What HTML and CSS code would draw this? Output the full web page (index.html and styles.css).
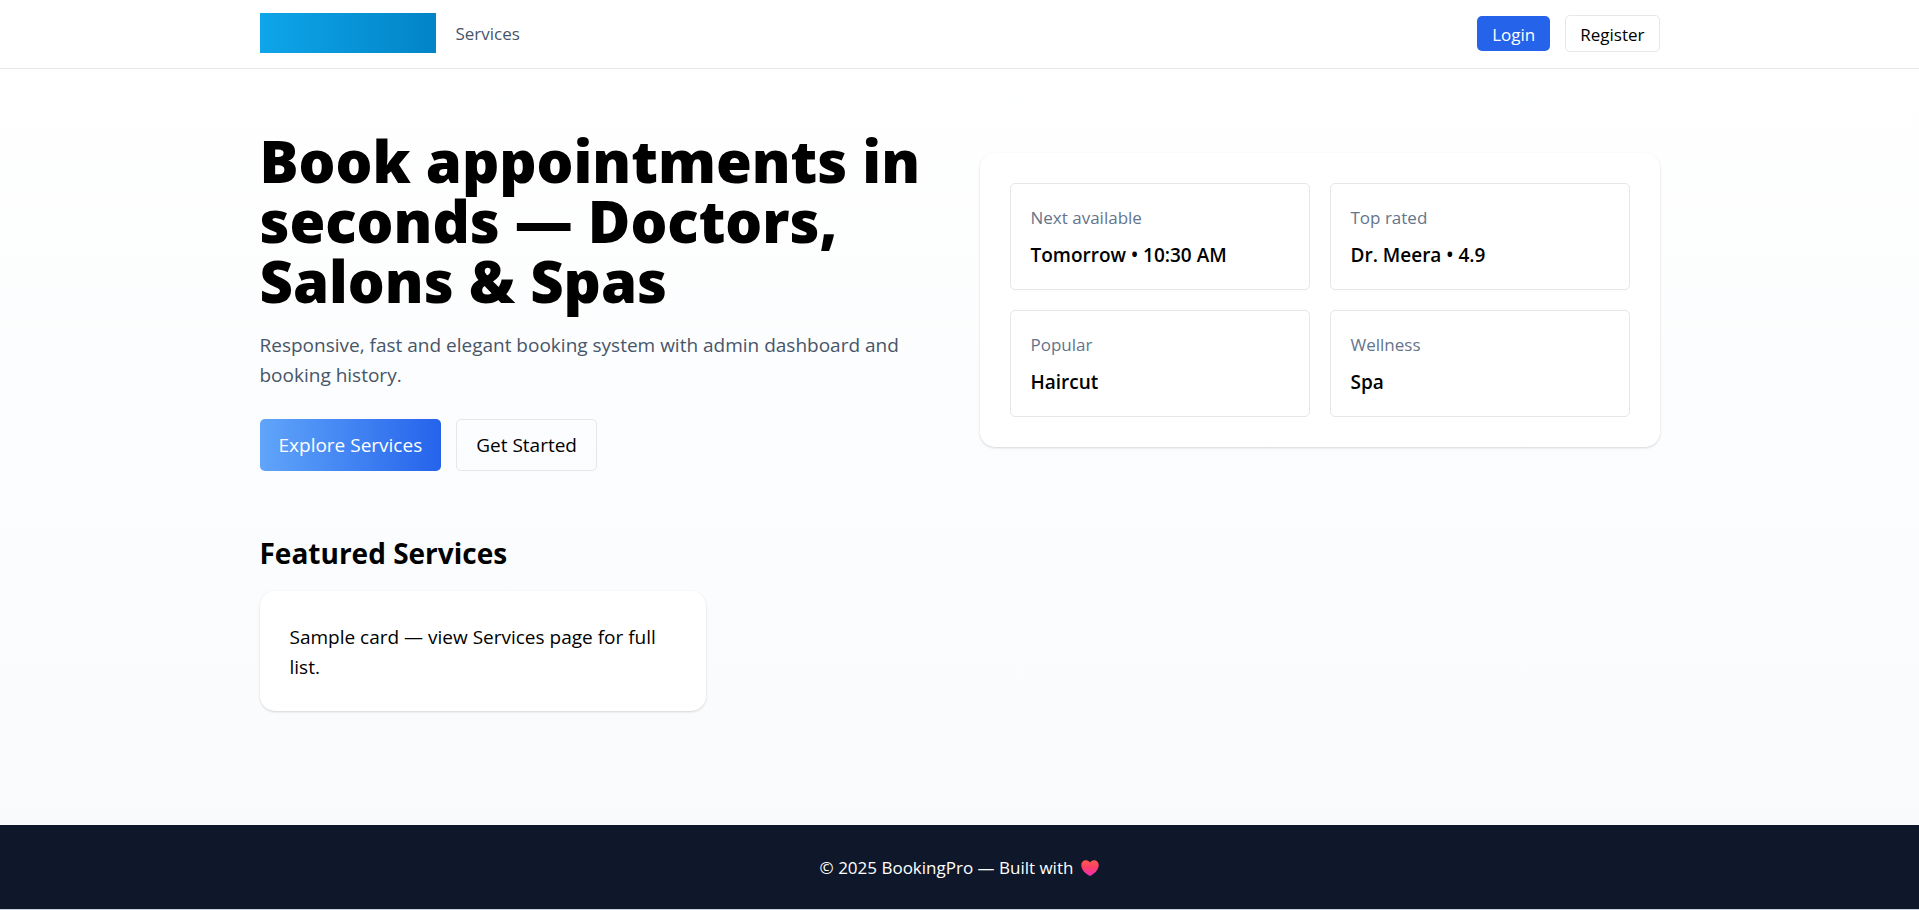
FILE: index.html
```html
<!DOCTYPE html>
<html lang="en">
<head>
<meta charset="utf-8">
<meta name="viewport" content="width=device-width, initial-scale=1">
<title>BookingPro</title>
<link rel="stylesheet" href="styles.css">
</head>
<body>
<header class="site-header">
  <div class="container header-row">
    <nav class="nav">
      <a class="logo" href="#" aria-label="BookingPro"></a>
      <a class="nav-link" href="#services">Services</a>
    </nav>
    <div class="auth">
      <a class="btn-small btn-login" href="#login">Login</a>
      <a class="btn-small btn-register" href="#register">Register</a>
    </div>
  </div>
</header>
<main class="container main">
  <section class="hero">
    <div>
      <h1 class="hero-title">Book appointments in seconds — Doctors, Salons &amp; Spas</h1>
      <p class="hero-text">Responsive, fast and elegant booking system with admin dashboard and booking history.</p>
      <div class="actions">
        <a class="btn btn-primary" href="#services">Explore Services</a>
        <a class="btn btn-outline" href="#register">Get Started</a>
      </div>
    </div>
    <div class="card stats">
      <div class="stat"><div class="stat-label">Next available</div><div class="stat-value">Tomorrow • 10:30 AM</div></div>
      <div class="stat"><div class="stat-label">Top rated</div><div class="stat-value">Dr. Meera • 4.9</div></div>
      <div class="stat"><div class="stat-label">Popular</div><div class="stat-value">Haircut</div></div>
      <div class="stat"><div class="stat-label">Wellness</div><div class="stat-value">Spa</div></div>
    </div>
  </section>
  <section id="services">
    <h2 class="section-title">Featured Services</h2>
    <div class="services">
      <div class="card">Sample card — view Services page for full list.</div>
    </div>
  </section>
</main>
<footer class="site-footer">
  <span>© 2025 BookingPro — Built with</span>
  <svg class="heart" viewBox="0 0 18 16" role="img" aria-label="love">
    <defs><linearGradient id="heart-fill" x1="0" y1="0" x2="0" y2="1"><stop offset="0" stop-color="#ff5a4f"/><stop offset=".45" stop-color="#fb3f66"/><stop offset="1" stop-color="#f02fb0"/></linearGradient></defs>
    <path fill="url(#heart-fill)" d="M9 2.4C7.9 1 6.500.3 5 .3 2.300.3.3 2.400.3 5.200c0 4.300 3.900 8 7.600 10.200.7.4 1.500.4 2.200 0 3.700-2.200 7.600-5.900 7.600-10.200C17.700 2.400 15.700.3 13 .3 11.500.3 10.100 1 9 2.400z"/>
  </svg>
</footer>
</body>
</html>
```
FILE: styles.css
```css
* { box-sizing: border-box; }

body {
  display: flex;
  flex-direction: column;
  min-height: 100vh;
  margin: 0;
  background: linear-gradient(#ffffff, #f8fafc);
  color: #000;
  font-family: "Open Sans", "Noto Sans", sans-serif;
  font-size: 19px;
  line-height: 30px;
}

h1, h2, p { margin: 0; }
a { color: inherit; text-decoration: none; }

.container {
  width: 100%;
  max-width: 1440px;
  margin: 0 auto;
  padding: 0 20px;
}

.site-header {
  background: #fff;
  border-bottom: 1px solid #e5e7eb;
}

.header-row {
  display: flex;
  align-items: center;
  justify-content: space-between;
  padding-top: 13px;
  padding-bottom: 15px;
}

.nav { display: flex; align-items: center; gap: 20px; }
.logo { width: 176px; height: 40px; background: linear-gradient(90deg, #0ea5e9, #0284c7); }
.nav-link { padding-top: 2px; color: #475569; font-size: 17px; }

.auth { display: flex; align-items: center; gap: 15px; font-size: 17px; line-height: 25px; }
.btn-small { padding: 6px 15px 4px; border-radius: 5px; }
.btn-login { background: #2563eb; color: #fff; }
.btn-register { padding-right: 14px; padding-left: 14px; border: 1px solid #e5e7eb; }

.main { flex: 1; padding-top: 60px; padding-bottom: 114px; }

.hero {
  display: grid;
  grid-template-columns: 1fr 1fr;
  align-items: center;
  gap: 40px;
  margin-bottom: 60px;
}

.hero-title { padding-top: 2px; font-size: 58px; font-weight: 800; line-height: 60px; }
.hero-text { margin-top: 19px; color: #475569; }
.actions { display: flex; gap: 15px; margin-top: 29px; }
.btn { display: flex; align-items: center; padding: 11px 19px; border-radius: 5px; }
.btn-primary { background: linear-gradient(90deg, #60a5fa, #2563eb); color: #fff; }
.btn-outline { padding-top: 10px; padding-bottom: 10px; border: 1px solid #e5e7eb; }

.card {
  padding: 31px 30px 29px;
  border-radius: 15px;
  background: #fff;
  box-shadow: 0 1px 3px rgba(0, 0, 0, .1), 0 1px 2px rgba(0, 0, 0, .06);
}

.stats { display: grid; grid-template-columns: 1fr 1fr; gap: 20px; padding: 30px; }
.stat { padding: 21px 20px 19px; border: 1px solid #e5e7eb; border-radius: 5px; }
.stat-label { margin-bottom: 10px; color: #64748b; font-size: 17px; line-height: 25px; }
.stat-value { font-weight: 600; }

.section-title { padding-top: 2px; margin-bottom: 18px; font-size: 28px; font-weight: 700; line-height: 40px; }
.services { display: grid; grid-template-columns: repeat(3, 1fr); gap: 30px; }

.site-footer {
  display: flex;
  align-items: center;
  justify-content: center;
  gap: 8px;
  padding: 31px 0 29px;
  border-bottom: 1px solid #cbd5e1;
  background: #0f172a;
  color: #fff;
  font-size: 17px;
  line-height: 24px;
}
.heart { width: 18px; height: 16px; }
```
